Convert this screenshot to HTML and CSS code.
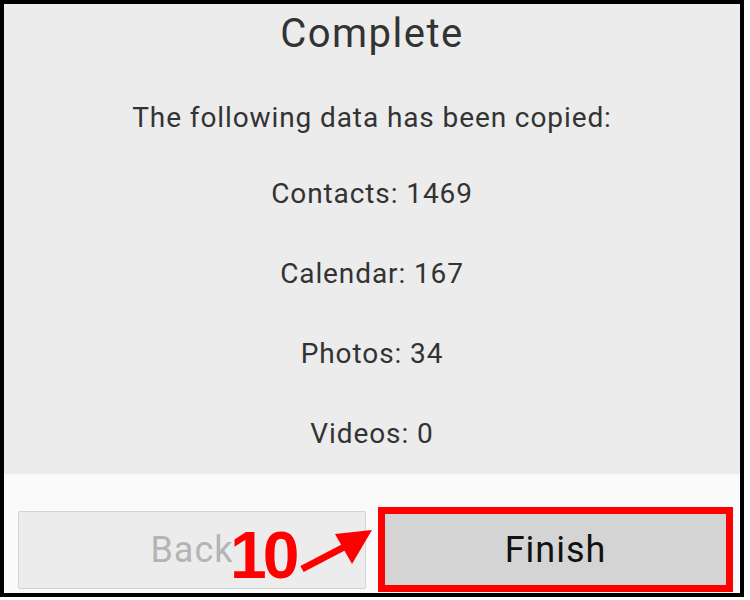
FILE: index.html
```html
<!DOCTYPE html>
<html lang="en">
<head>
    <meta charset="UTF-8">
    <meta name="viewport" content="width=device-width, initial-scale=1.0">
    <title>Complete</title>
    <link rel="stylesheet" href="styles.css">
</head>
<body>
    <div class="frame">
        <div class="summary">
            <h1 class="title">Complete</h1>
            <p class="intro">The following data has been copied:</p>
            <p class="count">Contacts: 1469</p>
            <p class="count">Calendar: 167</p>
            <p class="count">Photos: 34</p>
            <p class="count">Videos: 0</p>
        </div>
        <div class="actions">
            <button class="btn btn-back" disabled>Back</button>
            <button class="btn btn-finish">Finish</button>
        </div>

        <!-- step marker drawn over the buttons -->
        <div class="step">10</div>
        <svg class="arrow" width="80" height="50" viewBox="0 0 80 50">
            <line x1="6" y1="43" x2="52" y2="19" stroke="#f00" stroke-width="7"/>
            <polygon points="76,4 39,8 56,38" fill="#f00"/>
        </svg>
    </div>
</body>
</html>
```

FILE: styles.css
```css
body {
    margin: 0;
    padding: 0;
    background-color: #fff;
    font-family: Roboto, "Liberation Sans", sans-serif;
}

.frame {
    position: relative;
    width: 736px;
    height: 589px;
    border: 4px solid #000;
    background-color: #fafafa;
    overflow: hidden;
}

.summary {
    height: 470px;
    background-color: #ececec;
    text-align: center;
    color: #333;
}

.title {
    margin: 0;
    padding-top: 3px;
    font-size: 40px;
    font-weight: 400;
    letter-spacing: 1.5px;
    line-height: 54px;
}

.intro {
    margin: 21px 0 0;
    font-size: 28px;
    letter-spacing: 0.9px;
    line-height: 72px;
}

.count {
    margin: 0;
    font-size: 28px;
    letter-spacing: 0.9px;
    line-height: 80px;
}

.actions {
    display: flex;
    align-items: center;
    gap: 12px;
    padding: 33px 0 0 14px;
}

.btn {
    font-family: Roboto, "Liberation Sans", sans-serif;
    font-size: 36px;
    letter-spacing: 1px;
    padding: 0;
    cursor: pointer;
}

.btn-back {
    width: 348px;
    height: 78px;
    background-color: #ececec;
    border: 1px solid #d4d4d4;
    border-radius: 2px;
    color: #b4b4b4;
}

.btn-finish {
    width: 355px;
    height: 85px;
    background-color: #d4d4d4;
    border: 7px solid #f00;
    color: #111;
}

.step {
    position: absolute;
    left: 226px;
    top: 518px;
    font-family: "Liberation Sans", Arial, sans-serif;
    font-weight: 700;
    font-size: 66px;
    letter-spacing: -4px;
    line-height: 1;
    color: #f00;
}

.arrow {
    position: absolute;
    left: 292px;
    top: 522px;
}
```
